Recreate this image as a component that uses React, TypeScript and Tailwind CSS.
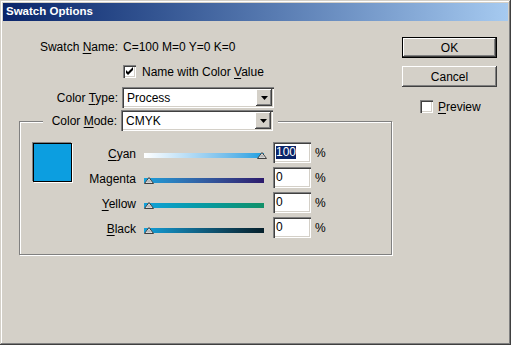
import React from "react";

// Win2k style "Swatch Options" dialog

const raised =
  "shadow-[inset_-1px_-1px_#404040,inset_1px_1px_#ffffff,inset_-2px_-2px_#808080,inset_2px_2px_#d4d0c8]";
const sunken =
  "shadow-[inset_1px_1px_#808080,inset_2px_2px_#404040,inset_-1px_-1px_#ffffff,inset_-2px_-2px_#d4d0c8]";

const U = ({ children }: { children: React.ReactNode }) => (
  <span className="underline underline-offset-[2px]">{children}</span>
);

const CheckBox = ({ checked }: { checked?: boolean }) => (
  <div className={`w-[13px] h-[13px] bg-white shrink-0 ${sunken}`}>
    {checked && (
      <svg width="13" height="13" viewBox="0 0 13 13">
        <path d="M3 5 L3 8 L5 10 L10 5 L10 2 L5 7 Z" fill="#000" />
      </svg>
    )}
  </div>
);

const Select = ({ value }: { value: string }) => (
  <div
    className={`w-[152px] h-[21px] bg-white flex items-center pl-[5px] pr-[2px] ${sunken}`}
  >
    <span className="flex-1 leading-none">{value}</span>
    <div
      className={`w-[16px] h-[17px] bg-[#d4d0c8] flex items-center justify-center ${raised}`}
    >
      <svg width="7" height="4" viewBox="0 0 7 4">
        <path d="M0 0 H7 L3.5 4 Z" fill="#000" />
      </svg>
    </div>
  </div>
);

const Triangle = () => (
  <svg width="10" height="7" viewBox="0 0 10 7">
    <path d="M5 0.5 L9.5 6.5 H0.5 Z" fill="#e8e8e8" stroke="#404040" />
    <path d="M5 2 L7.5 5.5 H2.5 Z" fill="#b8b8b8" />
  </svg>
);

interface SliderRowProps {
  label: React.ReactNode;
  gradient: string;
  value: string;
  selected?: boolean;
  thumbRight?: boolean;
}

const SliderRow: React.FC<SliderRowProps> = ({
  label,
  gradient,
  value,
  selected,
  thumbRight,
}) => (
  <div className="flex items-center h-[21px]">
    <div className="w-[64px] text-right mt-[3px] leading-none">{label}</div>
    <div className="relative w-[120px] h-[5px] ml-[8px] mt-[5px]">
      <div className={`w-full h-full ${gradient}`} />
      <div
        className={`absolute top-[-1px] ${
          thumbRight ? "right-[-3px]" : "left-[0px]"
        }`}
      >
        <Triangle />
      </div>
    </div>
    <div
      className={`w-[38px] h-[21px] bg-white ml-[9px] flex items-center pl-[3px] ${sunken}`}
    >
      <span
        className={`leading-[13px] ${
          selected ? "bg-[#0a246a] text-white" : ""
        }`}
      >
        {value}
      </span>
    </div>
    <span className="ml-[4px] mt-[1px]">%</span>
  </div>
);

export default function App() {
  return (
    <div
      className="w-[511px] h-[345px] bg-[#d4d0c8] p-[3px] text-[12px] text-black shadow-[inset_-1px_-1px_#404040,inset_1px_1px_#d4d0c8,inset_-2px_-2px_#808080,inset_2px_2px_#ffffff] overflow-hidden"
      style={{ fontFamily: '"Liberation Sans", Arial, sans-serif' }}
    >
      {/* 타이틀 바 */}
      <div className="h-[18px] bg-gradient-to-r from-[#0a246a] to-[#a6caf0] flex items-center pl-[3px]">
        <span className="text-white font-bold text-[11.5px] leading-none">
          Swatch Options
        </span>
      </div>

      <div className="flex">
        {/* 왼쪽 영역 */}
        <div className="w-[399px] flex flex-col">
          <div className="flex items-center h-[14px] mt-[19px]">
            <div className="w-[115px] text-right leading-none">
              Swatch <U>N</U>ame:
            </div>
            <div className="ml-[5px] leading-none">C=100 M=0 Y=0 K=0</div>
          </div>

          <div className="flex items-center h-[15px] mt-[10px]">
            <div className="w-[120px]" />
            <CheckBox checked />
            <span className="ml-[6px] leading-none">
              Name with Color <U>V</U>alue
            </span>
          </div>

          <div className="flex items-center mt-[8px]">
            <div className="w-[115px] text-right leading-none">
              Color <U>T</U>ype:
            </div>
            <div className="ml-[4px]">
              <Select value="Process" />
            </div>
          </div>

          {/* 그룹 박스 */}
          <div className="ml-[16px] w-[373px] mt-[13px] border border-[#808080] shadow-[inset_1px_1px_#ffffff,1px_1px_#ffffff] pb-[16px]">
            <div className="flex -mt-[12px] ml-[23px]">
              <div className="flex items-center bg-[#d4d0c8] pr-[5px]">
                <div className="w-[74px] text-right leading-none">
                  Color <U>M</U>ode:
                </div>
                <div className="ml-[4px]">
                  <Select value="CMYK" />
                </div>
              </div>
            </div>

            <div className="flex mt-[11px]">
              <div className="ml-[13px] mt-[1px] w-[39px] h-[39px] bg-[#0c9ee0] border border-black shadow-[1px_1px_#ffffff,-1px_-1px_#808080]" />
              <div className="flex flex-col gap-[4px]">
                <SliderRow
                  label={
                    <>
                      <U>C</U>yan
                    </>
                  }
                  gradient="bg-gradient-to-r from-[#ffffff] to-[#0a9fe0]"
                  value="100"
                  selected
                  thumbRight
                />
                <SliderRow
                  label="Magenta"
                  gradient="bg-gradient-to-r from-[#12a0da] to-[#2c1a6c]"
                  value="0"
                />
                <SliderRow
                  label={
                    <>
                      <U>Y</U>ellow
                    </>
                  }
                  gradient="bg-gradient-to-r from-[#12a0da] to-[#119068]"
                  value="0"
                />
                <SliderRow
                  label={
                    <>
                      <U>B</U>lack
                    </>
                  }
                  gradient="bg-gradient-to-r from-[#12a0da] to-[#06202c]"
                  value="0"
                />
              </div>
            </div>
          </div>
        </div>

        {/* 오른쪽 버튼 영역 */}
        <div className="flex flex-col mt-[16px]">
          <button className="w-[95px] h-[21px] border border-black bg-[#d4d0c8] shadow-[inset_-1px_-1px_#404040,inset_1px_1px_#ffffff,inset_-2px_-2px_#808080] leading-none">
            OK
          </button>
          <button
            className={`w-[95px] h-[21px] mt-[8px] bg-[#d4d0c8] leading-none ${raised}`}
          >
            Cancel
          </button>
          <div className="flex items-center mt-[13px] ml-[18px]">
            <CheckBox />
            <span className="ml-[5px] leading-none">
              <U>P</U>review
            </span>
          </div>
        </div>
      </div>
    </div>
  );
}
